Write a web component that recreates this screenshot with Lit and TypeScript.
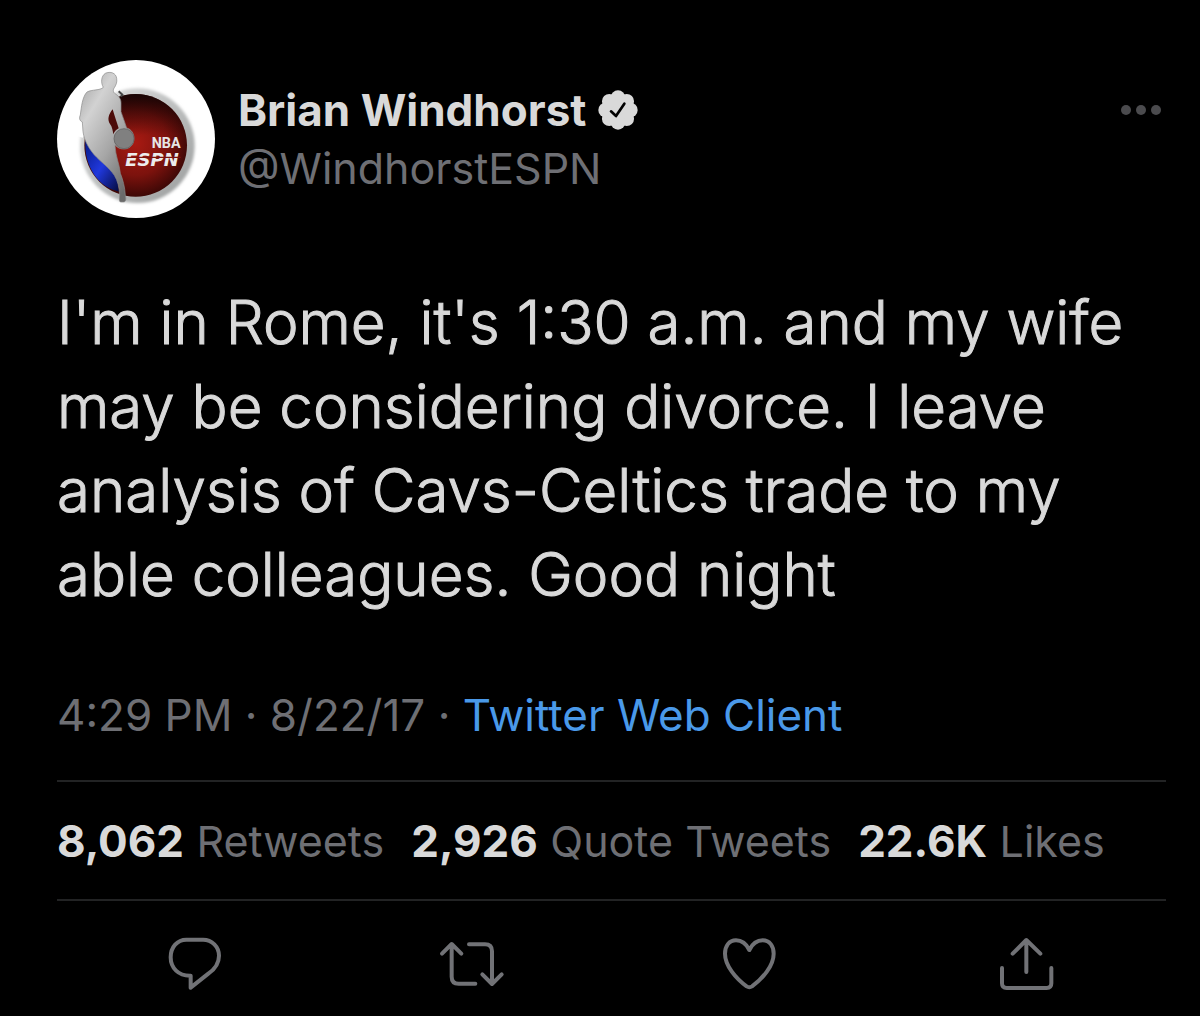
import { LitElement, html, css, svg } from "lit";
import { customElement } from "lit/decorators.js";

const badgeAngles = [0, 45, 90, 135, 180, 225, 270, 315];

const stats = [
  { count: "8,062", label: "Retweets" },
  { count: "2,926", label: "Quote Tweets" },
  { count: "22.6K", label: "Likes" },
];

const actions = [
  {
    label: "Reply",
    box: "47 45 180 180",
    shape: svg`<path d="M108 59H158C185 59 206 80 206 107C206 130 194 147 174 161L121 203V167C84 168 61 144 61 112C61 81 81 59 108 59Z"/>`,
  },
  {
    label: "Retweet",
    box: "39 45 180 180",
    shape: svg`<path d="M36 101L65 72L94 101M65 74V170Q65 191 86 191H136M117 73H165Q186 73 186 94V191M157 163L186 192L215 163"/>`,
  },
  {
    label: "Like",
    box: "45 45 180 180",
    shape: svg`<path d="M133 90C123 70 109 61 93 61C72 61 60 78 60 101C60 137 93 176 125 199Q133 204 141 199C173 176 206 137 206 101C206 78 194 61 173 61C157 61 143 70 133 90Z"/>`,
  },
  {
    label: "Share",
    box: "51 45 180 180",
    shape: svg`<path d="M98 101L139 60L181 101M139 62V156M66 144V190Q66 204 80 204H200Q214 204 214 190V144"/>`,
  },
];

@customElement("tweet-avatar")
export class TweetAvatar extends LitElement {
  static styles = css`
    :host { display: block; flex: none; width: 158px; height: 158px; }
    .art { display: block; width: 100%; height: 100%; }
    .nba { font: 700 43px Roboto, "Liberation Sans", sans-serif; }
    .espn { font: italic 700 54px "DejaVu Sans", sans-serif; }
  `;

  render() {
    return html`
      <svg class="art" viewBox="21 29 474 474" role="img" aria-label="NBA ESPN">
        <defs>
          <radialGradient id="red" cx="50%" cy="48%" r="52%">
            <stop offset="0" stop-color="#a81a12" />
            <stop offset=".6" stop-color="#7c120d" />
            <stop offset="1" stop-color="#3d0806" />
          </radialGradient>
          <linearGradient id="shade" x1="0" y1="0" x2="0" y2="1">
            <stop offset="0" stop-color="#120404" stop-opacity=".9" />
            <stop offset=".4" stop-color="#2a0505" stop-opacity="0" />
          </linearGradient>
          <linearGradient id="ring" x1="0" y1="0" x2="1" y2="1">
            <stop offset="0" stop-color="#e4e4e4" />
            <stop offset=".5" stop-color="#bcbebe" />
            <stop offset="1" stop-color="#9a9c9c" />
          </linearGradient>
          <linearGradient id="player" x1="0" y1="0" x2=".7" y2="1">
            <stop offset="0" stop-color="#9c9c9c" />
            <stop offset=".3" stop-color="#d2d2d2" />
            <stop offset=".65" stop-color="#a6a6a6" />
            <stop offset="1" stop-color="#6a6a6a" />
          </linearGradient>
          <linearGradient id="blue" x1="0" y1="0" x2="1" y2="1">
            <stop offset="0" stop-color="#071a86" />
            <stop offset=".5" stop-color="#2038dd" />
            <stop offset="1" stop-color="#050b3c" />
          </linearGradient>
          <filter id="soft" x="-10%" y="-10%" width="120%" height="120%">
            <feGaussianBlur stdDeviation="4" />
          </filter>
        </defs>
        <circle cx="258" cy="266" r="237" fill="#fff" />
        <circle cx="262" cy="286" r="172" fill="url(#ring)" filter="url(#soft)" />
        <circle cx="257" cy="285" r="154" fill="url(#red)" />
        <circle cx="257" cy="285" r="154" fill="url(#shade)" />
        <path d="M106 270C102 350 145 411 207 424L200 372L150 300Z" fill="url(#blue)" />
        <path d="M84 150H150L106 250L98 262L84 258Z" fill="#fff" />
        <path
          d="M160 111C152 98 153 77 166 69C181 62 198 68 200 84C202 96 198 103 195 109C189 117 188 124 194 129C204 136 213 144 213 157V184C218 199 225 217 230 233C243 236 252 249 252 264C252 283 239 296 222 296C210 296 202 292 195 284C196 318 209 342 211 369C218 386 225 411 226 436C229 446 228 455 220 455H211C206 451 209 442 209 434C208 411 203 391 193 375C175 350 158 339 140 321C119 300 103 273 99 244L97 215C88 211 87 203 91 194C94 171 97 139 111 125C126 117 150 121 160 111Z"
          fill="url(#player)" stroke="#8a8a8a" stroke-width="2" />
        <path d="M188 177C176 192 171 207 180 221C187 230 188 241 190 252C193 243 200 238 206 234C200 215 194 197 188 177Z" fill="#4c0b09" />
        <circle cx="222" cy="265" r="30" fill="#808080" stroke="#5a5a5a" stroke-width="2" />
        <path d="M206 123L217 133L213 139" fill="none" stroke="#444" stroke-width="6" />
        <text class="nba" x="305" y="292" fill="#e6e6e6">NBA</text>
        <text class="espn" x="226" y="347" fill="#ececec">ESPN</text>
        <path d="M226 321H392" stroke="#7c120d" stroke-width="4" />
      </svg>
    `;
  }
}

@customElement("app-root")
export class AppRoot extends LitElement {
  static styles = css`
    :host {
      display: block;
      min-height: 100vh;
      box-sizing: border-box;
      padding: 60px 34px 20px 57px;
      background: #000;
      color: #d9d9d9;
      font: 400 44px/58px Inter, "Liberation Sans", sans-serif;
    }
    a { color: inherit; text-decoration: none; }
    .header { display: flex; align-items: center; gap: 23px; }
    .who { flex: 1; min-width: 0; }
    .name { display: flex; align-items: center; gap: 12px; font-weight: 700; }
    .handle, .label, .meta { color: #6e6f74; }
    .handle, .label { font-size: 43px; }
    .badge { width: 40px; height: 40px; }
    .more {
      align-self: flex-start;
      display: flex;
      margin-top: 35px;
      padding: 0;
      border: 0;
      background: none;
      color: #4b4b4e;
    }
    .dots { width: 45px; height: 30px; }
    .text {
      margin: 62px 0 0;
      font-size: 60px;
      line-height: 84px;
      font-weight: 300;
      -webkit-text-stroke: 1px currentColor;
    }
    .meta { margin: 70px 0 36px; }
    .client { color: #4a99e9; }
    .stats {
      display: flex;
      flex-wrap: wrap;
      gap: 0 27px;
      padding: 30px 0 29px;
      border: solid #222324;
      border-width: 2px 0;
    }
    .count { font-weight: 700; }
    .actions { display: grid; grid-template-columns: repeat(4, 1fr); padding-top: 34px; }
    .action {
      display: flex;
      justify-content: center;
      padding: 0;
      border: 0;
      background: none;
      color: #717276;
    }
    .icon {
      width: 60px;
      height: 60px;
      overflow: visible;
      fill: none;
      stroke: currentColor;
      stroke-width: 12;
      stroke-linecap: round;
      stroke-linejoin: round;
    }
  `;

  render() {
    return html`
      <article>
        <header class="header">
          <tweet-avatar></tweet-avatar>
          <div class="who">
            <div class="name">
              <a href="#profile">Brian Windhorst</a>
              <svg class="badge" viewBox="0 0 120 120" role="img" aria-label="Verified account">
                <g fill="#d9d9d9">
                  <circle cx="60" cy="60" r="46" />
                  ${badgeAngles.map(
                    (a) => svg`<circle cx="60" cy="23" r="22" transform="rotate(${a} 60 60)"/>`
                  )}
                </g>
                <path d="M39 64L54 78L79 41" fill="none" stroke="#000" stroke-width="8" stroke-linecap="round" stroke-linejoin="round" />
              </svg>
            </div>
            <a class="handle" href="#profile">@WindhorstESPN</a>
          </div>
          <button class="more" aria-label="More">
            <svg class="dots" viewBox="0 0 45 30" fill="currentColor">
              <circle cx="5" cy="15" r="5" />
              <circle cx="20" cy="15" r="5" />
              <circle cx="35" cy="15" r="5" />
            </svg>
          </button>
        </header>
        <p class="text">I'm in Rome, it's 1:30 a.m. and my wife may be considering divorce. I leave analysis of Cavs-Celtics trade to my able colleagues. Good night</p>
        <p class="meta"><time>4:29 PM · 8/22/17</time> · <a class="client" href="#client">Twitter Web Client</a></p>
        <div class="stats">
          ${stats.map(
            (s) => html`<a href="#stats"><span class="count">${s.count}</span> <span class="label">${s.label}</span></a>`
          )}
        </div>
        <div class="actions">
          ${actions.map(
            (a) => html`<button class="action" aria-label=${a.label}>
              <svg class="icon" viewBox=${a.box}>${a.shape}</svg>
            </button>`
          )}
        </div>
      </article>
    `;
  }
}
